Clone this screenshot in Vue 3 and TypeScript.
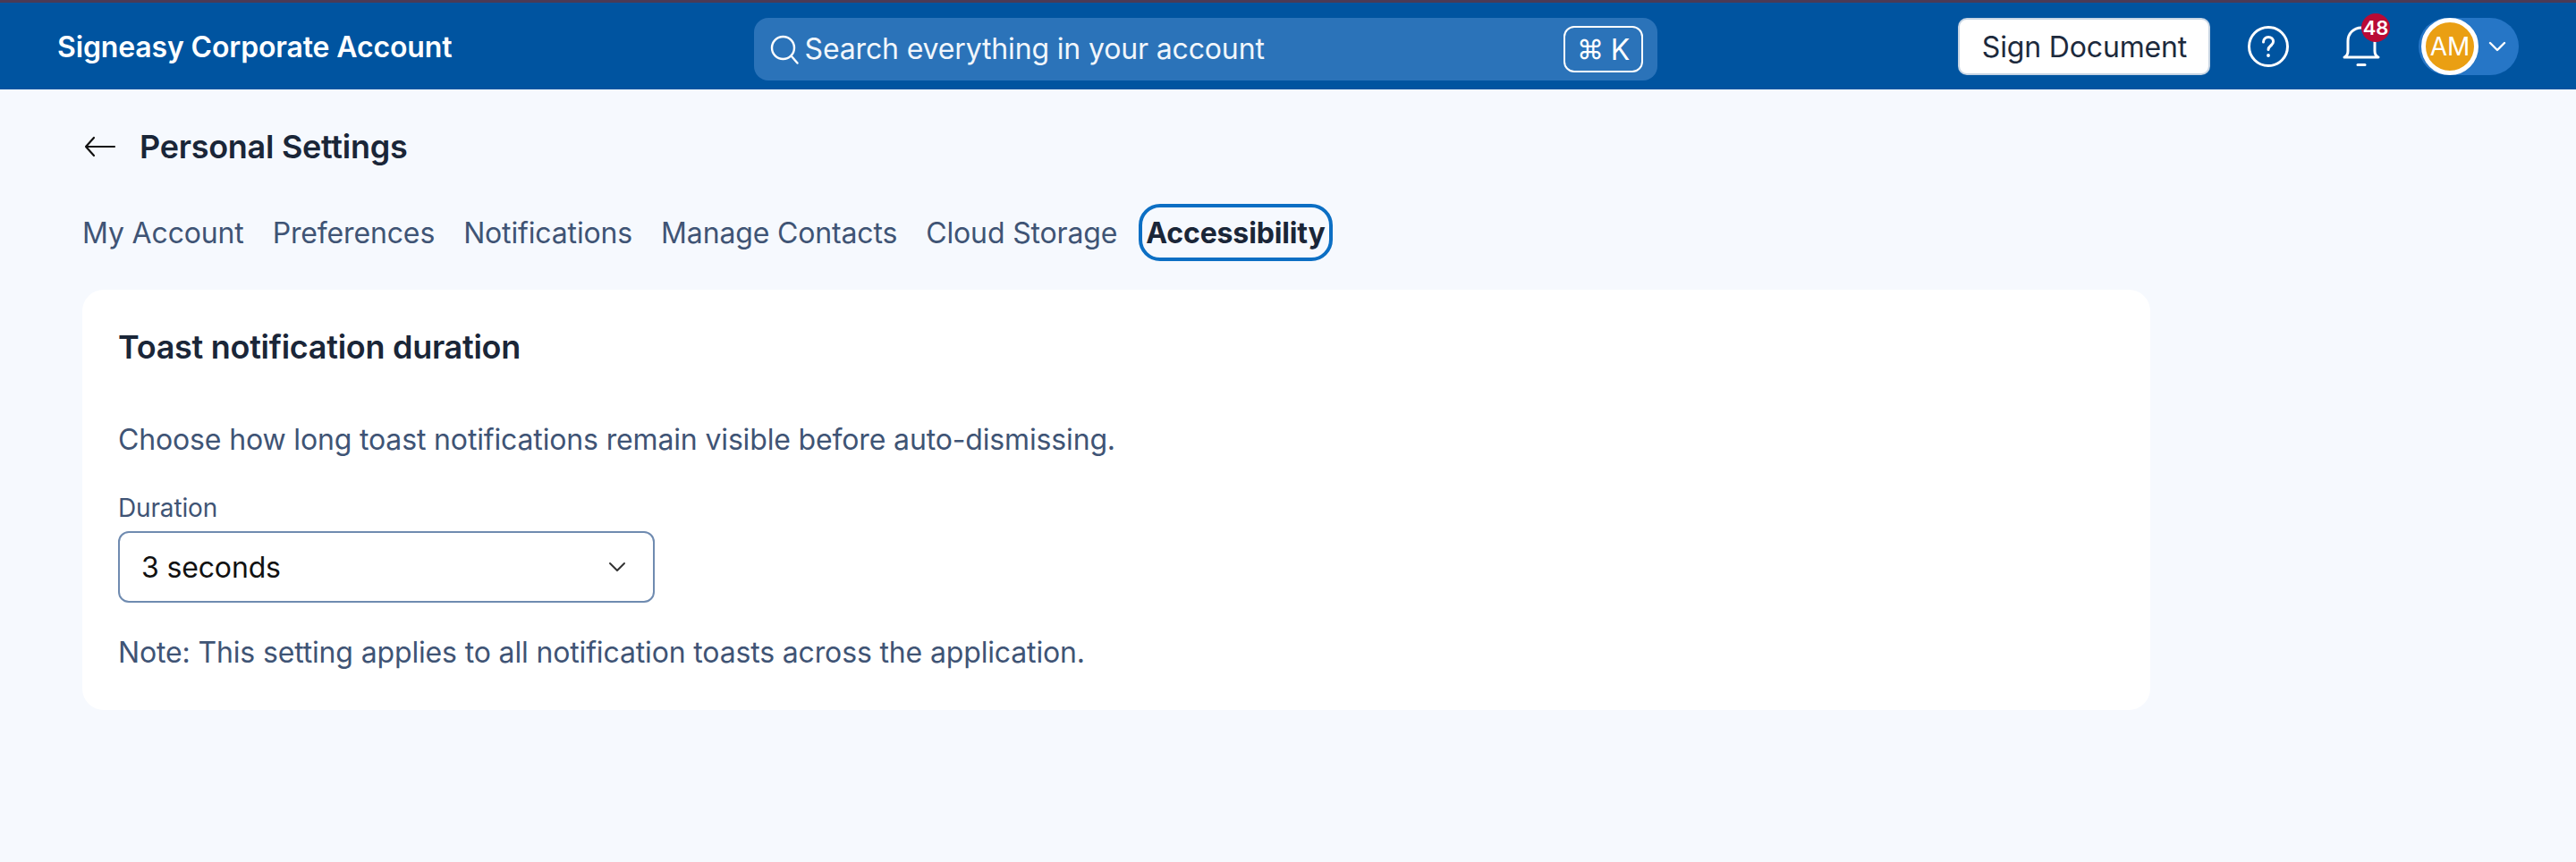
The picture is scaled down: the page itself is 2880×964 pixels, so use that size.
<script setup lang="ts">
const tabs = ['My Account', 'Preferences', 'Notifications', 'Manage Contacts', 'Cloud Storage', 'Accessibility']
const activeTab = 'Accessibility'
</script>

<template>
  <div class="page">
    <header class="topbar">
      <div class="brand">Signeasy Corporate Account</div>
      <div class="search">
        <svg class="search-icon" width="36" height="36" viewBox="0 0 36 36" fill="none" stroke="#fff" stroke-width="2.4" stroke-linecap="round">
          <circle cx="16.5" cy="16.5" r="12.5" />
          <path d="M26 26l6.5 7.5" />
        </svg>
        <span class="search-text">Search everything in your account</span>
        <span class="kbd"><span class="cmd">⌘</span><span>K</span></span>
      </div>
      <div class="actions">
        <button class="sign-btn">Sign Document</button>
        <svg class="help" width="48" height="48" viewBox="0 0 48 48" fill="none" stroke="#fff" stroke-width="3" stroke-linecap="round">
          <circle cx="24" cy="24" r="21.5" />
          <path d="M18.5 19c0-3.2 2.4-5.5 5.6-5.5s5.5 2.1 5.500 5c0 4.400-5.600 4.600-5.600 9" />
          <circle cx="24" cy="34" r="1.2" fill="#fff" stroke-width="1.400" />
        </svg>
        <div class="bell">
          <svg width="44" height="46" viewBox="0 0 44 46" fill="none" stroke="#fff" stroke-width="3" stroke-linecap="round" stroke-linejoin="round">
            <path d="M3 35c3-1.500 4-3.500 4-7V17C7 8.500 13.500 2 22 2s15 6.500 15 15v11c0 3.500 1 5.500 4 7z" />
            <path d="M18 43.500h8" />
          </svg>
          <span class="badge">48</span>
        </div>
        <div class="profile">
          <span class="avatar">AM</span>
          <svg width="20" height="12" viewBox="0 0 20 12" fill="none" stroke="#fff" stroke-width="2.4" stroke-linecap="round" stroke-linejoin="round">
            <path d="M2 2l8 8 8-8" />
          </svg>
        </div>
      </div>
    </header>

    <main class="content">
      <div class="title-row">
        <svg width="36" height="24" viewBox="0 0 36 24" fill="none" stroke="#111" stroke-width="2.200" stroke-linecap="round" stroke-linejoin="round">
          <path d="M34 12H2M11 2L2 12l9 10" />
        </svg>
        <h1>Personal Settings</h1>
      </div>

      <nav class="tabs">
        <span v-for="tab in tabs" :key="tab" class="tab" :class="{ active: tab === activeTab }">{{ tab }}</span>
      </nav>

      <section class="card">
        <h2>Toast notification duration</h2>
        <p class="desc">Choose how long toast notifications remain visible before auto-dismissing.</p>
        <label class="field-label">Duration</label>
        <div class="select">
          <span>3 seconds</span>
          <svg width="20" height="12" viewBox="0 0 20 12" fill="none" stroke="#333" stroke-width="2" stroke-linecap="round" stroke-linejoin="round">
            <path d="M2 2l8 8 8-8" />
          </svg>
        </div>
        <p class="note">Note: This setting applies to all notification toasts across the application.</p>
      </section>
    </main>
  </div>
</template>

<style>
html, body {
  margin: 0;
  background: #f6f9fe;
}
</style>

<style scoped>
* {
  box-sizing: border-box;
}

.page {
  min-height: 964px;
  background: #f6f9fe;
  font-family: Inter, "Liberation Sans", sans-serif;
  color: #3f5475;
  letter-spacing: -0.15px;
}

.topbar {
  height: 100px;
  border-top: 3px solid #4a3a56;
  background: #0054a0;
  display: flex;
  align-items: center;
  padding: 0 64px;
}

.brand {
  width: 779px;
  color: #fff;
  font-size: 32px;
  font-weight: 600;
  margin-top: 1px;
}

.search {
  width: 1011px;
  height: 70px;
  margin-top: 7px;
  background: #2b73b9;
  border-radius: 16px;
  display: flex;
  align-items: center;
  padding: 0 16px;
  color: #fff;
}

.search-icon {
  flex: none;
  margin-right: 5px;
}

.search-text {
  flex: 1;
  font-size: 32px;
  color: #f1f6fb;
  margin-top: -2px;
}

.kbd {
  width: 89px;
  height: 52px;
  border: 2px solid #fff;
  border-radius: 12px;
  display: flex;
  align-items: center;
  justify-content: center;
  gap: 8px;
  font-size: 32px;
}

.cmd {
  font-size: 30px;
}

.actions {
  display: flex;
  align-items: center;
  margin-left: 336px;
  margin-top: 1px;
}

.sign-btn {
  width: 282px;
  height: 64px;
  background: #fff;
  border: 2px solid #c6d4e3;
  border-radius: 10px;
  font-family: inherit;
  font-size: 32px;
  letter-spacing: inherit;
  color: #1d2a3d;
  padding: 0 0 0 1px;
}

.help {
  margin-left: 41px;
}

.bell {
  position: relative;
  width: 44px;
  height: 46px;
  margin-left: 58px;
}

.bell svg {
  display: block;
}

.badge {
  position: absolute;
  top: -14px;
  left: 22px;
  width: 32px;
  height: 32px;
  border-radius: 50%;
  background: #b90a35;
  color: #fff;
  font-size: 22px;
  font-weight: 600;
  display: flex;
  align-items: center;
  justify-content: center;
}

.profile {
  width: 112px;
  height: 64px;
  margin-left: 42px;
  border-radius: 32px;
  background: #2676c6;
  display: flex;
  align-items: center;
  padding-left: 3px;
  gap: 11px;
}

.avatar {
  width: 64px;
  height: 64px;
  flex: none;
  border-radius: 50%;
  border: 5px solid #fff;
  background: #ea9f13;
  color: #fff;
  font-size: 28px;
  display: flex;
  align-items: center;
  justify-content: center;
}

.content {
  padding: 0 92px;
}

.title-row {
  height: 64px;
  margin-top: 32px;
  display: flex;
  align-items: center;
  gap: 26px;
  padding-left: 2px;
}

h1,
h2 {
  margin: 0;
  font-size: 36px;
  font-weight: 600;
  letter-spacing: -0.28px;
  color: #1a2638;
}

.tabs {
  display: flex;
  align-items: center;
  gap: 32px;
  height: 64px;
  margin-top: 32px;
  font-size: 32px;
}

.tab {
  white-space: nowrap;
}

.tab.active {
  height: 64px;
  padding: 0 4px;
  margin-left: -8px;
  border: 4px solid #0c6fc4;
  border-radius: 24px;
  display: flex;
  align-items: center;
  font-weight: 700;
  color: #1a2638;
}

.card {
  width: 2312px;
  height: 470px;
  margin-top: 32px;
  padding: 40px;
  background: #fff;
  border-radius: 24px;
}

h2 {
  line-height: 48px;
}

.desc {
  margin: 56px 0 0;
  font-size: 32px;
  line-height: 48px;
}

.field-label {
  display: block;
  margin-top: 32px;
  font-size: 28px;
  line-height: 40px;
}

.select {
  width: 600px;
  height: 80px;
  margin-top: 6px;
  border: 2px solid #6f8bb0;
  border-radius: 12px;
  display: flex;
  align-items: center;
  justify-content: space-between;
  padding: 0 30px 0 24px;
  font-size: 32px;
  color: #111;
}

.note {
  margin: 32px 0 0;
  font-size: 32px;
  line-height: 48px;
}
</style>
